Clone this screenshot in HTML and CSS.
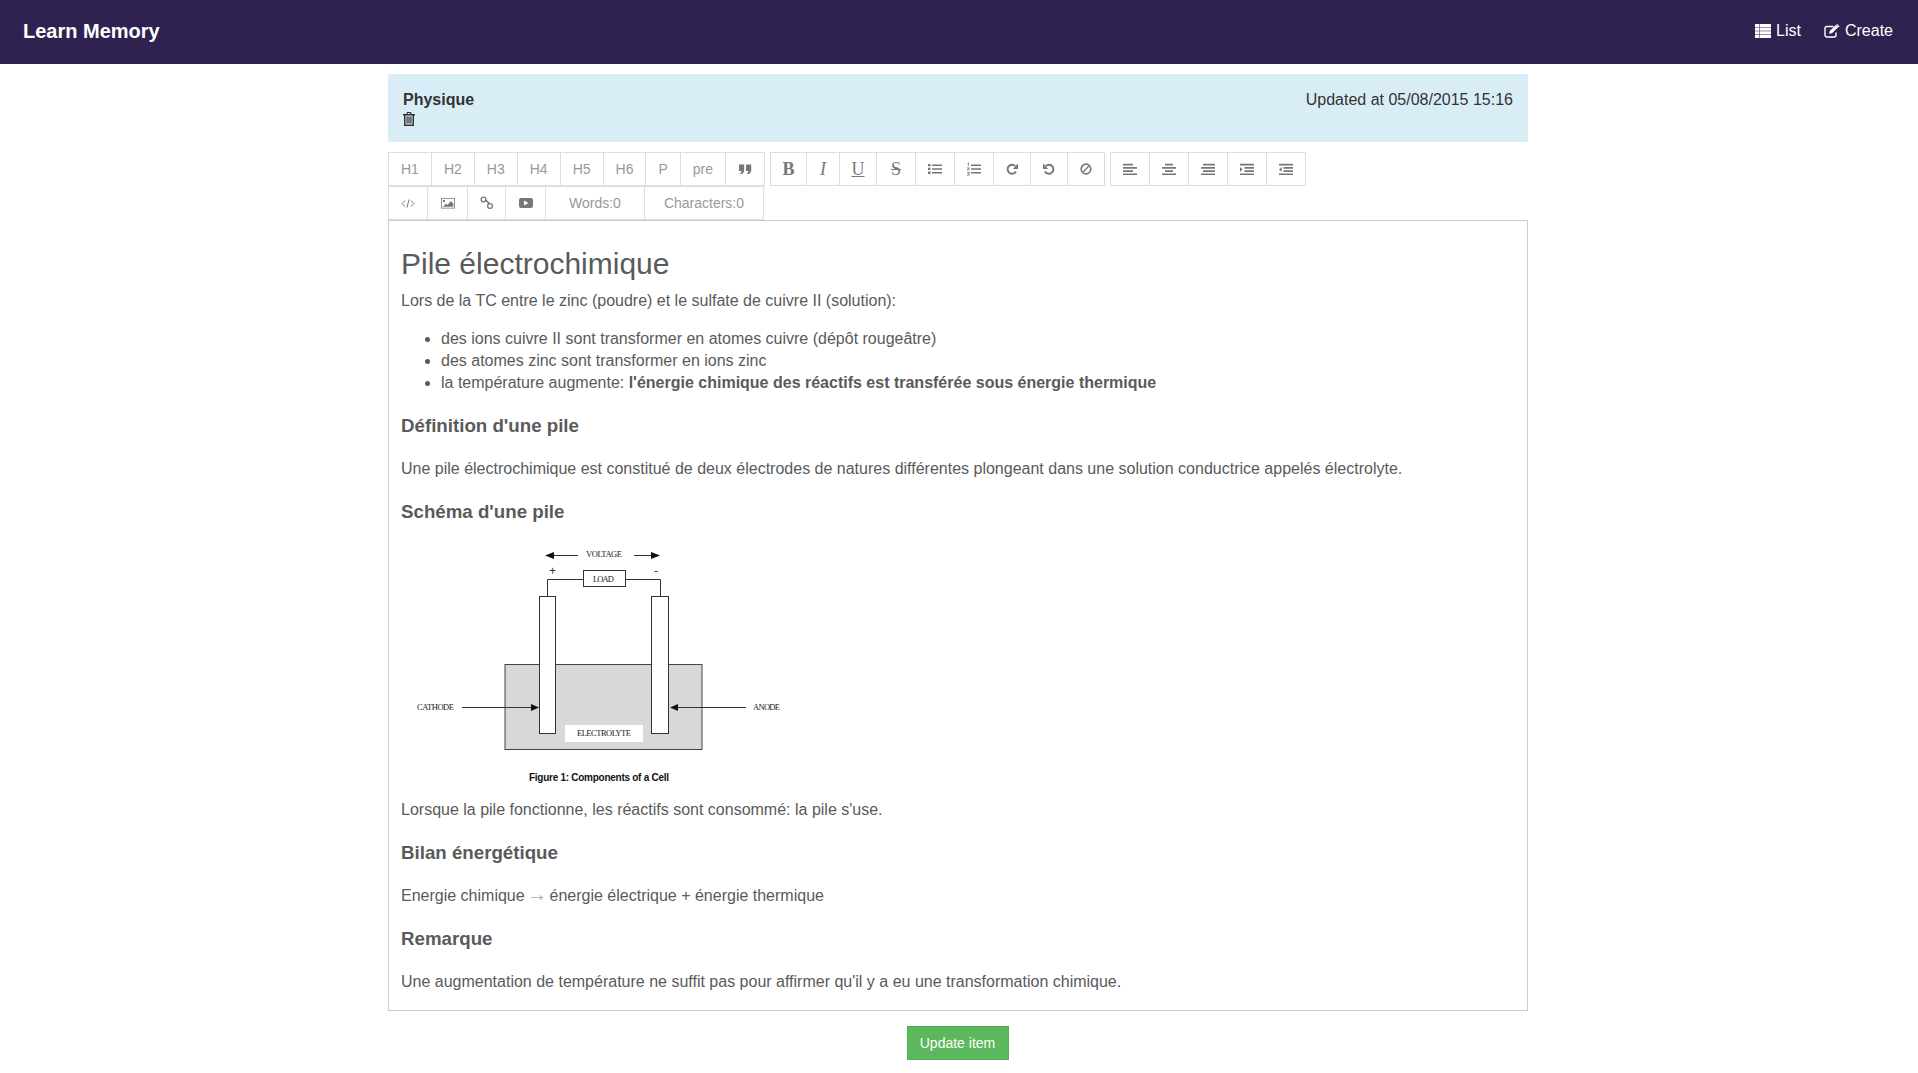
FILE: index.html
```html
<!DOCTYPE html>
<html>
<head>
<meta charset="utf-8">
<title>Learn Memory</title>
<link rel="stylesheet" href="styles.css">
</head>
<body>
<nav class="navbar">
  <a class="brand">Learn Memory</a>
  <div class="nav-links">
    <a class="nav-link">
      <svg class="nav-icon" viewBox="0 0 16 14"><path fill="currentColor" d="M0 0h4.300v3.200H0zM4.800 0H16v3.200H4.800zM0 3.800h4.300v2.900H0zM4.800 3.800H16v2.900H4.800zM0 7.300h4.300v2.900H0zM4.800 7.300H16v2.900H4.800zM0 10.800h4.300V14H0zM4.800 10.800H16V14H4.800z"/></svg>
      List
    </a>
    <a class="nav-link">
      <svg class="nav-icon" viewBox="0 0 16 14"><path fill="none" stroke="currentColor" stroke-width="1.400" d="M12 8.500V11a2 2 0 0 1-2 2H3a2 2 0 0 1-2-2V4.500a2 2 0 0 1 2-2h6.500"/><path fill="currentColor" d="M5 9.800l.7-2.700L11.800 1l2.300 2.300L8 9.200zM12.600.3l.5-.3 2.400 2.300-.3.600-.6.500-2.300-2.300z"/></svg>
      Create
    </a>
  </div>
</nav>

<div class="container">
  <div class="alert">
    <div class="alert-left">
      <strong>Physique</strong>
      <svg class="trash" viewBox="0 0 12 14"><path fill="currentColor" d="M4 0h4l.8 2H12v1.500h-1V14H1V3.500H0V2h3.200zM4.900 1.100 4.600 2h2.800l-.3-.9zM2.500 3.500v9h7v-9zM3.500 4.500h1.200v7H3.500zM5.400 4.500h1.200v7H5.400zM7.300 4.500h1.200v7H7.300z"/></svg>
    </div>
    <div class="updated">Updated at 05/08/2015 15:16</div>
  </div>

  <div class="toolbar">
    <div class="tool-group">
      <a class="tool">H1</a><a class="tool">H2</a><a class="tool">H3</a><a class="tool">H4</a><a class="tool">H5</a><a class="tool">H6</a><a class="tool">P</a><a class="tool">pre</a>
      <a class="tool"><svg class="ic ic-14" viewBox="0 0 14 14"><path d="M1 2.500h5.200V8c0 2.500-1.500 3.800-3.500 4.200L2 10.900c1-.2 1.500-.8 1.500-1.900H1zM8 2.500h5.200V8c0 2.500-1.500 3.800-3.500 4.200L9 10.900c1-.2 1.500-.8 1.500-1.900H8z"/></svg></a>
    </div>
    <div class="tool-group">
      <a class="tool"><span class="serif b">B</span></a>
      <a class="tool"><span class="serif i">I</span></a>
      <a class="tool"><span class="serif u">U</span></a>
      <a class="tool"><span class="serif s">S</span></a>
      <a class="tool"><svg class="ic ic-14" viewBox="0 0 14 14"><path d="M0 2h2.500v2.300H0zM0 5.800h2.500v2.300H0zM0 9.600h2.500v2.300H0zM4 2.400h10v1.600H4zM4 6.200h10v1.600H4zM4 10h10v1.600H4z"/></svg></a>
      <a class="tool"><svg class="ic ic-14" viewBox="0 0 14 14"><path d="M.8.500h1v3.200h-1zM0 5.500h2.500v.8L1 7.600h1.500v.7H0v-.7l1.500-1.300H0zM0 10h2.500v3.500H0v-.7h1.700v-.6H.6v-.6h1.100v-.8H0zM4 2.400h10v1.600H4zM4 6.200h10v1.600H4zM4 10h10v1.600H4z"/></svg></a>
      <a class="tool"><svg class="ic ic-12" viewBox="0 0 12 14"><path fill="none" stroke="currentColor" stroke-width="1.900" d="M10 9.500A4.500 4.500 0 1 1 9.200 4"/><path d="M12 1.500V7H6.800z"/></svg></a>
      <a class="tool"><svg class="ic ic-12" viewBox="0 0 12 14"><path fill="none" stroke="currentColor" stroke-width="1.900" d="M2 9.500A4.500 4.500 0 1 0 2.800 4"/><path d="M0 1.500V7h5.200z"/></svg></a>
      <a class="tool"><svg class="ic ic-12" viewBox="0 0 12 14"><circle cx="6" cy="7" r="4.800" fill="none" stroke="currentColor" stroke-width="1.700"/><path d="M2.800 9.200 8.400 3.600l1 1-5.600 5.600z"/></svg></a>
    </div>
    <div class="tool-group">
      <a class="tool"><svg class="ic ic-14" viewBox="0 0 14 14"><path d="M0 1.800h10v1.700H0zM0 5h14v1.700H0zM0 8.200h10v1.700H0zM0 11.400h14v1.700H0z"/></svg></a>
      <a class="tool"><svg class="ic ic-14" viewBox="0 0 14 14"><path d="M3 1.800h8v1.700H3zM0 5h14v1.700H0zM3 8.200h8v1.700H3zM0 11.400h14v1.700H0z"/></svg></a>
      <a class="tool"><svg class="ic ic-14" viewBox="0 0 14 14"><path d="M2 1.800h12v1.700H2zM0 5h14v1.700H0zM2 8.200h12v1.700H2zM0 11.400h14v1.700H0z"/></svg></a>
      <a class="tool"><svg class="ic ic-14" viewBox="0 0 14 14"><path d="M0 1.800h14v1.700H0zM4.500 5H14v1.700H4.500zM4.500 8.200H14v1.700H4.500zM0 11.400h14v1.700H0zM0 5l2.700 2.400L0 9.800z"/></svg></a>
      <a class="tool"><svg class="ic ic-14" viewBox="0 0 14 14"><path d="M0 1.800h14v1.700H0zM4.500 5H14v1.700H4.500zM4.500 8.200H14v1.700H4.500zM0 11.400h14v1.700H0zM2.700 5 0 7.400l2.700 2.400z"/></svg></a>
    </div>
    <div class="tool-break"></div>
    <div class="tool-group">
      <a class="tool"><svg class="ic ic-14" viewBox="0 0 14 14"><path fill="none" stroke="currentColor" d="M4 4.500 1 7.500l3 3M10 4.500l3 3-3 3M8 3.500l-2 8"/></svg></a>
      <a class="tool tool-image"><svg class="ic ic-14" viewBox="0 0 14 14"><path fill-rule="evenodd" d="M0 2h14v10.500H0zM.8 2.800v8.900h12.400V2.800z"/><path d="M1.800 10.700 5 7.500l1.500 1.500L10 5l2.300 2.500v3.200zM2 4h2v2H2z"/></svg></a>
      <a class="tool tool-link"><svg class="ic ic-14" viewBox="0 0 14 14"><circle cx="3.500" cy="3.500" r="2.400" fill="none" stroke="currentColor" stroke-width="1.300"/><circle cx="10" cy="10" r="2.400" fill="none" stroke="currentColor" stroke-width="1.300"/><path d="M5 4.300l1-1 4 4-1 1.100z"/></svg></a>
      <a class="tool tool-video"><svg class="ic ic-14" viewBox="0 0 14 14"><path fill-rule="evenodd" d="M2 2h10a2 2 0 0 1 2 2v6a2 2 0 0 1-2 2H2a2 2 0 0 1-2-2V4a2 2 0 0 1 2-2zM5 4.500v5L9.500 7z"/></svg></a>
      <a class="tool tool-words">Words:0</a>
      <a class="tool tool-chars">Characters:0</a>
    </div>
  </div>

  <div class="editor">
    <h2>Pile électrochimique</h2>
    <p class="intro">Lors de la TC entre le zinc (poudre) et le sulfate de cuivre II (solution):</p>
    <ul>
      <li>des ions cuivre II sont transformer en atomes cuivre (dépôt rougeâtre)</li>
      <li>des atomes zinc sont transformer en ions zinc</li>
      <li>la température augmente: <b>l'énergie chimique des réactifs est transférée sous énergie thermique</b></li>
    </ul>
    <h4>Définition d'une pile</h4>
    <p>Une pile électrochimique est constitué de deux électrodes de natures différentes plongeant dans une solution conductrice appelés électrolyte.</p>
    <h4>Schéma d'une pile</h4>
    <svg class="schema" viewBox="401 544 400 255">
      <rect x="505" y="664.500" width="197" height="85" fill="#d8d8d8" stroke="#444"/>
      <rect x="539.500" y="596.500" width="16" height="137" fill="#fff" stroke="#333"/>
      <rect x="651.500" y="596.500" width="17" height="137" fill="#fff" stroke="#333"/>
      <rect x="565" y="725" width="78" height="17" fill="#fff"/>
      <rect x="583.500" y="570.500" width="42" height="16" fill="#fff" stroke="#333"/>
      <path fill="none" stroke="#333" d="M547.500 596v-16.500H583M626 579.500h34.500V596M578 555.500h-25M634 555.500h18M462 707.500h70M746 707.500h-70"/>
      <path fill="#111" d="M545 555.500l9-3.500v7zM660 555.500l-9-3.500v7zM539 707.500l-8-3.500v7zM670 707.500l8-3.500v7z"/>
      <g class="schema-label">
        <text x="586" y="556.500" textLength="36">VOLTAGE</text>
        <text x="593" y="581.500" textLength="21">LOAD</text>
        <text x="417" y="710" textLength="37">CATHODE</text>
        <text x="753" y="710" textLength="27">ANODE</text>
        <text x="577" y="736" textLength="54">ELECTROLYTE</text>
      </g>
      <text class="schema-sign" x="549" y="575">+</text>
      <text class="schema-sign" x="654" y="575">-</text>
      <text class="schema-fig" x="529" y="781" textLength="140">Figure 1: Components of a Cell</text>
    </svg>
    <p>Lorsque la pile fonctionne, les réactifs sont consommé: la pile s'use.</p>
    <h4>Bilan énergétique</h4>
    <p>Energie chimique <span class="arrow">→</span> énergie électrique + énergie thermique</p>
    <h4>Remarque</h4>
    <p>Une augmentation de température ne suffit pas pour affirmer qu'il y a eu une transformation chimique.</p>
  </div>

  <div class="actions">
    <a class="btn-update">Update item</a>
  </div>
</div>
</body>
</html>
```

FILE: styles.css
```css
body {
	margin: 0;
	font-family: "Liberation Sans", Arial, sans-serif;
	font-size: 16px;
	line-height: 22px;
	color: #5a5a5a;
	background: #fff;
}
.navbar {
	height: 64px;
	background-color: #2f2250;
	color: #fff;
	display: flex;
	align-items: center;
	justify-content: space-between;
	padding: 0 25px 2px 23px;
	box-sizing: border-box;
}
.brand {
	font-size: 20px;
	font-weight: bold;
}
.nav-links {
	display: flex;
	gap: 23px;
}
.nav-link {
	display: flex;
	align-items: center;
	gap: 5px;
}
.nav-icon {
	width: 16px;
	height: 14px;
}
.container {
	width: 1140px;
	margin: 10px 0 0 388px;
}
.alert {
	height: 68px;
	box-sizing: border-box;
	padding: 15px 15px 0;
	background-color: #d9edf7;
	color: #333;
	display: flex;
	justify-content: space-between;
}
.alert-left {
	display: flex;
	flex-direction: column;
	align-items: flex-start;
}
.trash {
	width: 12px;
	height: 14px;
	margin-top: 1px;
}
.toolbar {
	display: flex;
	flex-wrap: wrap;
	margin-top: 10px;
}
.tool-break {
	flex-basis: 100%;
}
.tool-group {
	display: flex;
	margin-right: 5px;
}
.tool {
	display: flex;
	align-items: center;
	justify-content: center;
	height: 34px;
	box-sizing: border-box;
	padding: 0 12px;
	margin-left: -1px;
	border: 1px solid #ddd;
	font-size: 14px;
	color: #999;
}
.tool-group .tool:first-child {
	margin-left: 0;
}
.tool-image {
	padding: 0 12.500px;
}
.tool-link {
	padding: 0 11.500px;
}
.tool-video {
	padding: 0 12.500px;
}
.tool-words {
	padding: 0 23px;
}
.tool-chars {
	padding: 0 19px;
}
.ic {
	height: 14px;
	fill: #777;
	color: #777;
}
.ic-14 {
	width: 14px;
}
.ic-12 {
	width: 12px;
}
.serif {
	font-family: "Liberation Serif", serif;
	font-size: 18px;
	color: #777;
	display: flex;
	justify-content: center;
}
.b {
	font-weight: bold;
	width: 11px;
}
.i {
	font-style: italic;
	width: 8px;
}
.u {
	text-decoration: underline;
	width: 12px;
}
.s {
	text-decoration: line-through;
	width: 14px;
}
.editor {
	border: 1px solid #ccc;
	padding: 16px 12px 17px;
}
.editor h2 {
	font-size: 30px;
	font-weight: normal;
	line-height: 33px;
	margin: 10px 0 10px;
}
.editor p {
	margin: 0;
}
.editor .intro {
	margin-bottom: 16px;
}
.editor ul {
	margin: 0;
	padding-left: 40px;
}
.editor h4 {
	font-size: 18.720px;
	line-height: 20px;
	margin: 22px 0 22px;
}
.arrow {
	font-size: 20px;
	line-height: 0;
	color: #aaa;
	margin: 0 -2px;
}
.schema {
	display: block;
	width: 400px;
	height: 255px;
}
.schema-label {
	font-family: "Liberation Serif", serif;
	font-size: 8.500px;
	fill: #222;
}
.schema-sign {
	font-size: 12px;
	fill: #333;
}
.schema-fig {
	font-size: 10px;
	font-weight: bold;
	fill: #111;
}
.actions {
	display: flex;
	justify-content: center;
	margin-top: 15px;
}
.btn-update {
	padding: 6px 13px 6px 12px;
	font-size: 14px;
	line-height: 20px;
	color: #fff;
	background-color: #5cb85c;
	border: 1px solid #4cae4c;
}
```
